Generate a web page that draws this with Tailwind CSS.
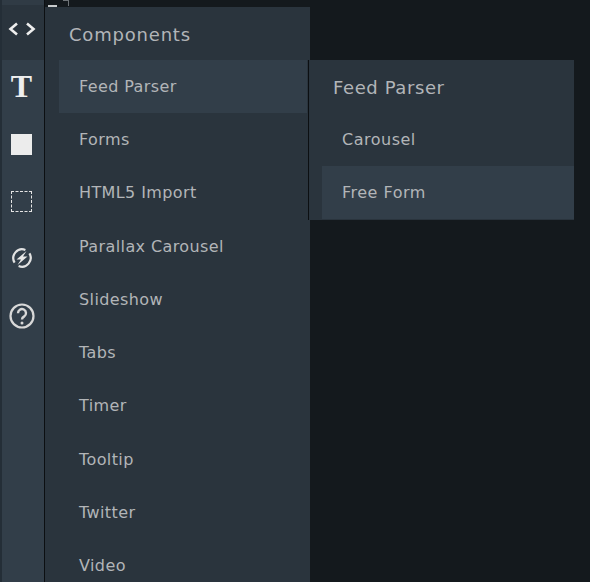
<!DOCTYPE html>
<html lang="en">
<head>
  <meta charset="UTF-8">
  <title>Components</title>
  <script src="https://cdn.jsdelivr.net/npm/@tailwindcss/browser@4"></script>
</head>
<body class="bg-[#14191d] font-['DejaVu_Sans',sans-serif] overflow-hidden">
  <div class="flex w-[590px] h-[582px] overflow-hidden">
    <!-- Icon bar -->
    <div class="w-[44px] shrink-0 pl-[2px] bg-[#242e37] flex flex-col">
      <div class="h-[60px] bg-[#2a343d] flex flex-col">
        <div class="h-[5px] bg-[#303b45]"></div>
        <div class="flex-1 flex items-center justify-center pr-[3px] pb-[7px]">
          <svg class="w-[28px] h-[16px]" viewBox="0 0 28 16" fill="none" stroke="#eeeeee" stroke-width="2.6">
            <path d="M9 2.5 L2.5 8 L9 13.5"/>
            <path d="M19 2.5 L25.5 8 L19 13.5"/>
          </svg>
        </div>
      </div>
      <div class="flex-1 bg-[#323e49] flex flex-col items-center pr-[3px]">
        <div class="h-[56px] pb-[4px] flex items-center justify-center font-['Liberation_Serif',serif] font-bold text-[32px] leading-none text-[#eeeeee]">T</div>
        <div class="h-[57px] pb-[1px] flex items-center justify-center">
          <div class="w-[21px] h-[21px] bg-[#ececec]"></div>
        </div>
        <div class="h-[57px] flex items-center justify-center">
          <div class="w-[21px] h-[21px] border border-dashed border-[#e4e4e4]"></div>
        </div>
        <div class="h-[57px] pb-[1px] flex items-center justify-center">
          <svg class="w-[20px] h-[20px]" viewBox="0 0 20 20" fill="none">
            <path d="M2.6 14.6 A8.8 8.8 0 0 1 13.4 1.9" stroke="#e2e2e2" stroke-width="2.2"/>
            <path d="M17.4 5.4 A8.8 8.8 0 0 1 6.6 18.1" stroke="#e2e2e2" stroke-width="2.2"/>
            <path d="M14.5 3 L4.5 11.5 H9 L5.5 17 L15.5 8.5 H11 Z" fill="#e8e8e8"/>
          </svg>
        </div>
        <div class="h-[58px] flex items-center justify-center">
          <svg class="w-[26px] h-[26px]" viewBox="0 0 26 26" fill="none" stroke="#d8d8d8">
            <circle cx="13" cy="13" r="11.5" stroke-width="2.2"/>
            <path d="M9 10.2 A4 4 0 1 1 15.2 13.4 C13.8 14.2 13 15 13 16.6" stroke-width="2.4"/>
            <circle cx="13" cy="20" r="1.5" fill="#d8d8d8" stroke="none"/>
          </svg>
        </div>
      </div>
    </div>
    <div class="w-px shrink-0 bg-[#0c0f12]"></div>

    <!-- Canvas behind the menus -->
    <div class="flex-1 flex flex-col relative">
      <div class="h-[7px] shrink-0 flex items-start pl-[3px] gap-[6px]">
        <div class="w-[9px] h-[2px] mt-[5px] bg-[#c8cacc]"></div>
        <div class="w-[6px] h-[6px] border-t border-r border-[#6f7478] mt-0"></div>
      </div>

      <!-- Components panel -->
      <div class="w-[265px] flex-1 bg-[#2a343d] text-[#b2b5b8] overflow-hidden">
        <div class="h-[53px] pl-[24px] pt-[1px] flex items-center text-[18px] tracking-[0.8px]">Components</div>
        <ul class="pl-[14px] pr-[3px] text-[16px] tracking-[0.4px]">
          <li class="h-[53.3px] pl-[20px] flex items-center bg-[#323e49]">Feed Parser</li>
          <li class="h-[53.3px] pl-[20px] flex items-center">Forms</li>
          <li class="h-[53.3px] pl-[20px] flex items-center">HTML5 Import</li>
          <li class="h-[53.3px] pl-[20px] flex items-center">Parallax Carousel</li>
          <li class="h-[53.3px] pl-[20px] flex items-center">Slideshow</li>
          <li class="h-[53.3px] pl-[20px] flex items-center">Tabs</li>
          <li class="h-[53.3px] pl-[20px] flex items-center">Timer</li>
          <li class="h-[53.3px] pl-[20px] flex items-center">Tooltip</li>
          <li class="h-[53.3px] pl-[20px] flex items-center">Twitter</li>
          <li class="h-[53.3px] pl-[20px] flex items-center">Video</li>
        </ul>
      </div>

      <!-- Feed Parser submenu -->
      <div class="absolute left-[263px] top-[60px] w-[266px] h-[160px] bg-[#2a343d] border-l border-[#0c0f12] text-[#b2b5b8]">
        <div class="h-[53px] pl-[24px] pt-[1px] flex items-center text-[18px] tracking-[0.6px]">Feed Parser</div>
        <ul class="pl-[13px] text-[16px] tracking-[0.5px]">
          <li class="h-[53px] pl-[20px] flex items-center">Carousel</li>
          <li class="h-[53px] pl-[20px] flex items-center bg-[#323e49]">Free Form</li>
        </ul>
      </div>
    </div>
  </div>
</body>
</html>
